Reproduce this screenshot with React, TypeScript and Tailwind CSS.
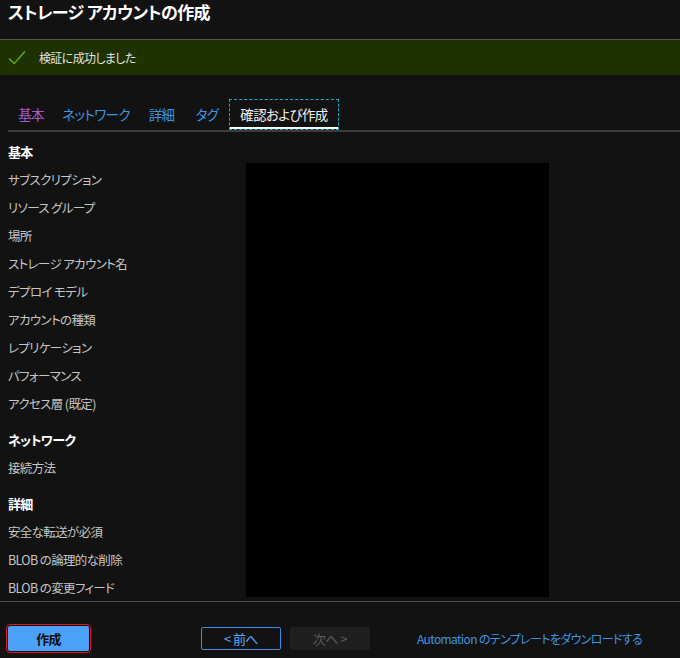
const FONT = "font-['Noto_Sans_CJK_JP','Noto_Sans',sans-serif] [font-feature-settings:'palt'] tracking-[-0.04em]";

const TABS = [
  { label: '基本', color: 'text-[#a55cd6]', w: 'w-[46px]' },
  { label: 'ネットワーク', color: 'text-[#3f95e0]', w: 'w-[84px]' },
  { label: '詳細', color: 'text-[#3f95e0]', w: 'w-[47px]' },
  { label: 'タグ', color: 'text-[#3f95e0]', w: 'w-[44px]' },
];

const SECTIONS: { title: string; rows: string[] }[] = [
  {
    title: '基本',
    rows: [
      'サブスクリプション',
      'リソース グループ',
      '場所',
      'ストレージ アカウント名',
      'デプロイ モデル',
      'アカウントの種類',
      'レプリケーション',
      'パフォーマンス',
      'アクセス層 (既定)',
    ],
  },
  { title: 'ネットワーク', rows: ['接続方法'] },
  { title: '詳細', rows: ['安全な転送が必須', 'BLOB の論理的な削除', 'BLOB の変更フィード'] },
];

function CheckIcon() {
  return (
    <svg width="18" height="15" viewBox="0 0 18 15" fill="none">
      <path d="M1 8.5 L6.2 13.6 L17 1.2" stroke="#5fb200" strokeWidth="1.4" />
    </svg>
  );
}

function Tabs() {
  return (
    <div className="flex items-stretch h-[33px] ml-2 border-b-2 border-[#3a3a3a]">
      {TABS.map((t) => (
        <div key={t.label} className={`flex items-center justify-center text-[13.5px] ${t.w} ${t.color}`}>
          {t.label}
        </div>
      ))}
      <div className="relative flex items-center justify-center w-[110px] text-[13.5px] text-[#f0f0f0] border border-dashed border-[#1aa6d6]">
        確認および作成
        <div className="absolute left-0 right-0 bottom-0 h-[2px] bg-white" />
      </div>
    </div>
  );
}

function Summary() {
  return (
    <div className="flex h-[469px] overflow-hidden">
      <div className="w-[246px] pl-2 pt-[6px] shrink-0">
        {SECTIONS.map((s, i) => (
          <div key={s.title} className={i > 0 ? 'mt-[8px]' : ''}>
            <div className="h-[28px] flex items-center text-[13px] font-bold text-white">{s.title}</div>
            {s.rows.map((r) => (
              <div key={r} className="h-[28px] flex items-center text-[12.5px] text-[#c6c6c6]">
                {r}
              </div>
            ))}
          </div>
        ))}
      </div>
      <div className="mt-[31px] w-[303px] h-[434px] bg-black" />
    </div>
  );
}

function Footer() {
  return (
    <div className="flex items-center pt-[24px] pl-2 border-t border-[#4a4a4a]">
      <button className="w-[81px] h-[25px] bg-[#4ba0f7] text-[13px] font-bold text-[#111] rounded-[2px] outline outline-1 outline-offset-1 outline-[#e3141e]">
        作成
      </button>
      <button className="ml-[112px] w-[80px] h-[23px] border border-[#3d8ee0] rounded-[2px] text-[13px] text-[#5aaaf5]">
        &lt; 前へ
      </button>
      <button className="ml-[9px] w-[80px] h-[23px] bg-[#1f1f1f] rounded-[2px] text-[13px] text-[#5e5e5e]">
        次へ &gt;
      </button>
      <span className="ml-[47px] text-[12px] text-[#3f95e0]">Automation のテンプレートをダウンロードする</span>
    </div>
  );
}

export default function App() {
  return (
    <div className={`w-[680px] h-[658px] bg-[#121212] flex flex-col overflow-hidden ${FONT}`}>
      <div className="h-[40px] shrink-0 px-2 pt-[1px] text-[17px] font-bold text-white leading-[22px] border-b border-[#555]">
        ストレージ アカウントの作成
      </div>
      <div className="h-[35px] shrink-0 bg-[#1d3200] flex items-center pl-2 gap-[13px]">
        <CheckIcon />
        <span className="text-[12px] text-[#e2e2e2]">検証に成功しました</span>
      </div>
      <div className="pt-[24px] shrink-0">
        <Tabs />
      </div>
      <Summary />
      <Footer />
    </div>
  );
}
